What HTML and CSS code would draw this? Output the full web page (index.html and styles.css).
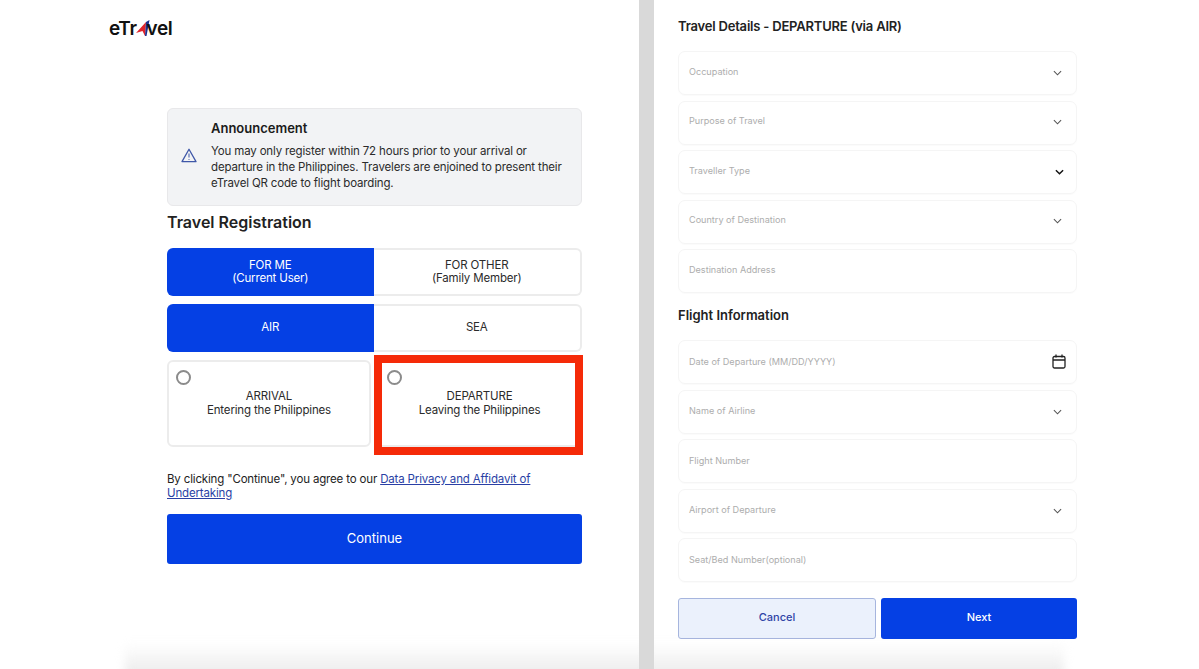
FILE: index.html
```html
<!DOCTYPE html>
<html lang="en">
<head>
    <meta charset="UTF-8">
    <title>eTravel Registration</title>
    <link rel="stylesheet" href="styles.css">
</head>
<body>
<div class="page">
    <section class="panel panel-left">
        <div class="logo">
            <span>eTr</span>
            <svg class="logo-mark" width="14" height="16" viewBox="0 0 14 16">
                <polygon points="0,13 10,2 9,16 6.5,11" fill="#e0242c"/>
                <polygon points="10,2 13.5,0 10.5,16 9,16" fill="#1c2f8f"/>
            </svg>
            <span>vel</span>
        </div>

        <div class="content">
            <div class="notice">
                <svg class="notice-icon" width="16" height="15" viewBox="0 0 16 15" fill="none" stroke="#3f57a8" stroke-width="1.3" stroke-linejoin="round">
                    <path d="M8 1.2 15 13.6H1z"/>
                    <path d="M8 5.5v4M8 11v.9" stroke-width="1"/>
                </svg>
                <div>
                    <h2 class="notice-title">Announcement</h2>
                    <p class="notice-text">You may only register within 72 hours prior to your arrival or departure in the Philippines. Travelers are enjoined to present their eTravel QR code to flight boarding.</p>
                </div>
            </div>

            <h1 class="section-title">Travel Registration</h1>

            <div class="toggle">
                <div class="toggle-item active">FOR ME<br>(Current User)</div>
                <div class="toggle-item">FOR OTHER<br>(Family Member)</div>
            </div>
            <div class="toggle">
                <div class="toggle-item active">AIR</div>
                <div class="toggle-item">SEA</div>
            </div>

            <div class="choices">
                <div class="choice">
                    <span class="radio"></span>
                    <p class="choice-text">ARRIVAL<br>Entering the Philippines</p>
                </div>
                <div class="choice choice-marked">
                    <span class="radio"></span>
                    <p class="choice-text">DEPARTURE<br>Leaving the Philippines</p>
                    <span class="highlight"></span>
                </div>
            </div>

            <p class="terms">By clicking "Continue", you agree to our <a href="#">Data Privacy and Affidavit of</a><br><a href="#">Undertaking</a></p>

            <button class="btn btn-primary btn-continue">Continue</button>
        </div>
        <div class="fade fade-left"></div>
    </section>

    <div class="divider"></div>

    <section class="panel panel-right">
        <div class="form">
            <h2 class="form-title">Travel Details - DEPARTURE (via AIR)</h2>

            <div class="fields">
                <div class="field">Occupation <svg class="chevron" viewBox="0 0 10 6"><path d="M1 1l4 4 4-4"/></svg></div>
                <div class="field">Purpose of Travel <svg class="chevron" viewBox="0 0 10 6"><path d="M1 1l4 4 4-4"/></svg></div>
                <div class="field">Traveller Type <svg class="chevron chevron-dark" viewBox="0 0 10 6"><path d="M1 1l4 4 4-4"/></svg></div>
                <div class="field">Country of Destination <svg class="chevron" viewBox="0 0 10 6"><path d="M1 1l4 4 4-4"/></svg></div>
                <div class="field">Destination Address</div>
            </div>

            <h2 class="form-title form-title-sub">Flight Information</h2>

            <div class="fields fields-flight">
                <div class="field">Date of Departure (MM/DD/YYYY)
                    <svg class="calendar" width="14" height="15" viewBox="0 0 14 15" fill="none" stroke="#222" stroke-width="1.3">
                        <rect x="1" y="2.5" width="12" height="11.5" rx="1.5"/>
                        <path d="M1 6h12M4 .5v3M10 .5v3"/>
                    </svg>
                </div>
                <div class="field">Name of Airline <svg class="chevron" viewBox="0 0 10 6"><path d="M1 1l4 4 4-4"/></svg></div>
                <div class="field">Flight Number</div>
                <div class="field">Airport of Departure <svg class="chevron" viewBox="0 0 10 6"><path d="M1 1l4 4 4-4"/></svg></div>
                <div class="field">Seat/Bed Number(optional)</div>
            </div>

            <div class="actions">
                <button class="btn btn-light">Cancel</button>
                <button class="btn btn-primary">Next</button>
            </div>
        </div>
        <div class="fade fade-right"></div>
    </section>
</div>
</body>
</html>
```

FILE: styles.css
```css
* {
    margin: 0;
    padding: 0;
    box-sizing: border-box;
}

body {
    font-family: "Inter", "Liberation Sans", sans-serif;
    color: #222;
    background: #fff;
}

.page {
    display: flex;
    width: 1199px;
    height: 669px;
    overflow: hidden;
}

.panel {
    position: relative;
    height: 669px;
    overflow: hidden;
}

.panel-left {
    width: 639px;
}

.panel-right {
    flex: 1;
}

.divider {
    width: 15px;
    background: #d9d9d9;
}

.fade {
    position: absolute;
    bottom: -10px;
    height: 36px;
    background: linear-gradient(to bottom, rgba(235, 235, 235, 0), #e8e8e8);
    filter: blur(5px);
}

.fade-left {
    left: 125px;
    right: -10px;
}

.fade-right {
    left: -10px;
    width: 420px;
}

/* logo */
.logo {
    display: flex;
    align-items: center;
    height: 18px;
    margin: 19px 0 0 109px;
    font-size: 19px;
    font-weight: 600;
    letter-spacing: -0.4px;
    color: #111;
}

.logo-mark {
    margin: 0 -3px 0 -1px;
}

/* left column */
.content {
    width: 415px;
    margin: 71px 0 0 167px;
}

.notice {
    display: flex;
    align-items: center;
    gap: 14px;
    height: 98px;
    padding: 0 14px 4px 13px;
    background: #f2f3f5;
    border: 1px solid #e8e8ea;
    border-radius: 6px;
}

.notice-icon {
    flex-shrink: 0;
}

.notice-title {
    margin-bottom: 7px;
    font-size: 13px;
    font-weight: 600;
    line-height: 16px;
    color: #1b1b1b;
}

.notice-text {
    font-size: 11.5px;
    line-height: 16px;
    letter-spacing: -0.16px;
    color: #2b2b2b;
}

.section-title {
    margin: 6px 0 16px;
    font-size: 16px;
    font-weight: 600;
    line-height: 20px;
    color: #222;
}

.toggle {
    display: flex;
    height: 48px;
    margin-bottom: 8px;
}

.toggle-item {
    display: flex;
    flex: 1;
    align-items: center;
    justify-content: center;
    border: 2px solid #ececec;
    border-left: 0;
    border-radius: 0 6px 6px 0;
    font-size: 11.5px;
    line-height: 13.5px;
    letter-spacing: -0.16px;
    text-align: center;
    color: #2b2b2b;
}

.toggle-item.active {
    background: #0540e4;
    border: 0;
    border-radius: 6px 0 0 6px;
    color: #fff;
}

.choices {
    display: flex;
    gap: 4px;
    height: 87px;
    margin-bottom: 26px;
}

.choice {
    position: relative;
    flex: 1;
    border: 2px solid #ececec;
    border-radius: 6px;
}

.choice-marked {
    flex: 0 0 207px;
}

.radio {
    position: absolute;
    top: 8px;
    left: 7px;
    width: 15px;
    height: 15px;
    border: 2px solid #8b8b8b;
    border-radius: 50%;
}

.choice-marked .radio {
    left: 10px;
}

.choice-text {
    margin-top: 28px;
    font-size: 11.5px;
    line-height: 13.5px;
    letter-spacing: -0.16px;
    text-align: center;
    color: #2b2b2b;
}

.choice-marked .choice-text {
    padding-left: 2px;
}

.highlight {
    position: absolute;
    top: -7px;
    right: -3px;
    bottom: -10px;
    left: -3px;
    border: 8px solid #f52a08;
}

.terms {
    margin-bottom: 14px;
    font-size: 11.5px;
    line-height: 13.5px;
    letter-spacing: -0.16px;
    color: #222;
}

.terms a {
    color: #2a3fa5;
}

.btn {
    padding-bottom: 3px;
    border: 0;
    border-radius: 3px;
    font-family: inherit;
    font-size: 11px;
    font-weight: 500;
}

.btn-primary {
    background: #0540e4;
    color: #fff;
}

.btn-light {
    background: #ebf1fc;
    border: 1px solid #a6b5de;
    color: #2f44a6;
}

.btn-continue {
    display: block;
    width: 100%;
    height: 50px;
    font-size: 13px;
    font-weight: 400;
}

/* right column */
.form {
    width: 399px;
    margin-left: 24px;
    padding-top: 17px;
}

.form-title {
    margin-bottom: 16px;
    font-size: 13px;
    font-weight: 600;
    line-height: 18px;
    letter-spacing: -0.2px;
    color: #222;
}

.form-title-sub {
    margin: 13px 0 16px;
    letter-spacing: 0;
}

.fields {
    display: flex;
    flex-direction: column;
    gap: 5.5px;
}

.field {
    display: flex;
    align-items: center;
    justify-content: space-between;
    height: 44px;
    padding: 0 14px 4px 10px;
    border: 1px solid #f5f5f5;
    border-radius: 7px;
    box-shadow: 0 1px 1px rgba(0, 0, 0, 0.02);
    font-size: 9.1px;
    color: #adadad;
}

.fields-flight .field {
    padding-bottom: 2px;
}

.chevron {
    width: 9px;
    height: 6px;
    margin-top: 3px;
    fill: none;
    stroke: #555;
    stroke-width: 1.2;
}

.chevron-dark {
    margin-right: -2px;
    stroke: #111;
    stroke-width: 1.6;
}

.calendar {
    margin-right: -4px;
}

.actions {
    display: flex;
    gap: 5px;
    margin-top: 16px;
}

.actions .btn {
    flex: 1;
    height: 41px;
}
```
